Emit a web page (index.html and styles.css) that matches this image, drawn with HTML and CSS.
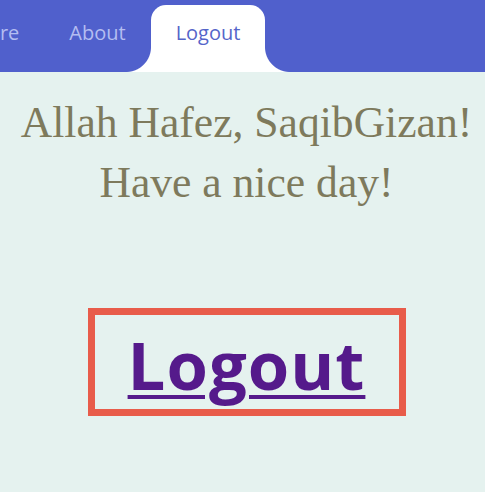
FILE: index.html
```html
<!DOCTYPE html>
<html lang="en">
<head>
<meta charset="utf-8">
<title>Logout</title>
<link rel="stylesheet" href="styles.css">
</head>
<body>
<nav class="nav">
  <ul class="nav-list">
    <li class="nav-item"><a class="nav-link" href="#">Explore</a></li>
    <li class="nav-item"><a class="nav-link" href="#">About</a></li>
    <li class="nav-item nav-item-active"><a class="nav-link" href="#">Logout</a></li>
  </ul>
</nav>
<main class="main">
  <h1 class="farewell">Allah Hafez, SaqibGizan!<br>Have a nice day!</h1>
  <div class="logout-box">
    <a class="logout-link" href="#">Logout</a>
  </div>
</main>
</body>
</html>
```

FILE: styles.css
```css
html, body {
  margin: 0;
  padding: 0;
}

body {
  background: #e5f2ef;
  width: 485px;
  height: 492px;
  overflow: hidden;
}

.nav {
  background: #5060cc;
  height: 72px;
  padding-top: 5px;
  box-sizing: border-box;
  overflow: hidden;
}

.nav-list {
  list-style: none;
  margin: 0 0 0 -76px;
  padding: 0;
  display: flex;
  height: 67px;
}

.nav-item {
  position: relative;
  padding: 14px 25px 0;
  font-family: "Open Sans", "Noto Sans", sans-serif;
  font-size: 20px;
  line-height: 27px;
}

.nav-link {
  color: #b4bdf1;
  text-decoration: none;
}

.nav-item-active {
  background: #ffffff;
  border-radius: 15px 15px 0 0;
}

.nav-item-active .nav-link {
  color: #5565c9;
}

.nav-item-active::before,
.nav-item-active::after {
  content: "";
  position: absolute;
  bottom: 0;
  width: 25px;
  height: 25px;
}

.nav-item-active::before {
  left: -25px;
  background: radial-gradient(circle at 0 0, transparent 24.5px, #ffffff 25.5px);
}

.nav-item-active::after {
  right: -25px;
  background: radial-gradient(circle at 100% 0, transparent 24.5px, #ffffff 25.5px);
}

.main {
  padding-left: 8px;
  display: flex;
  flex-direction: column;
  align-items: center;
}

.farewell {
  margin: 20px 0 0;
  font-family: "Liberation Serif", "Times New Roman", serif;
  font-weight: normal;
  font-size: 43.6px;
  line-height: 60px;
  color: #7e7a5c;
  text-align: center;
}

.logout-box {
  margin-top: 96px;
  width: 318px;
  height: 108px;
  box-sizing: border-box;
  border: 7px solid #e85c4a;
  padding-top: 16px;
  text-align: center;
}

.logout-link {
  font-family: "Open Sans", "Noto Sans", sans-serif;
  font-weight: 700;
  font-size: 67px;
  line-height: 66px;
  letter-spacing: 1px;
  color: #551a8b;
  text-decoration: underline;
  text-decoration-thickness: 4px;
  text-underline-offset: 5px;
}
```
